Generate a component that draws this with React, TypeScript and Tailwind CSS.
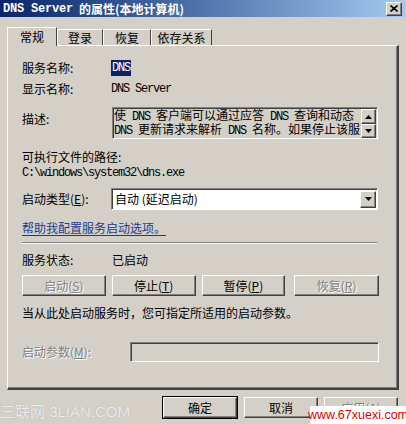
const raised =
  "border border-t-white border-l-white border-r-[#404040] border-b-[#404040] shadow-[inset_-1px_-1px_0_#808080]";
const sunken =
  "border border-t-[#808080] border-l-[#808080] border-r-white border-b-white shadow-[inset_1px_1px_0_#404040]";
const mono = "font-['Liberation_Mono',monospace] tracking-[-1.2px] whitespace-pre";
const disabled = "text-[#808080] [text-shadow:1px_1px_0_#fff]";

function Arrow({ up }: { up?: boolean }) {
  return (
    <svg width="7" height="4" viewBox="0 0 7 4" aria-hidden="true">
      {up ? <path d="M3.5 0L7 4H0Z" fill="#000" /> : <path d="M0 0H7L3.5 4Z" fill="#000" />}
    </svg>
  );
}

function Tab({ label, active, w }: { label: string; active?: boolean; w: string }) {
  return (
    <div
      className={`flex items-center justify-center border-t border-l border-r border-t-white border-l-white border-r-[#404040] ${w} ${
        active ? "h-[19px] -mb-px bg-[#D4D0C8] relative z-10" : "h-[16px]"
      }`}
    >
      <span className="text-[12px] leading-[14px]">{label}</span>
    </div>
  );
}

function Btn({ children, off, w }: { children: React.ReactNode; off?: boolean; w: string }) {
  return (
    <div className={`${raised} ${w} h-[21px] flex items-center justify-center bg-[#D4D0C8] text-[12px] ${off ? disabled : ""}`}>
      {children}
    </div>
  );
}

export default function App() {
  return (
    <div className="relative w-[406px] h-[424px] overflow-hidden bg-[#D4D0C8] text-black font-['Noto_Sans_CJK_SC',sans-serif] text-[12px] leading-[16px]">
      {/* title bar */}
      <div className="h-[17px] flex items-center justify-between pl-[3px] pr-[4px] bg-gradient-to-r from-[#0A246A] to-[#A6CAF0]">
        <div className="flex items-center text-white font-bold text-[12px] leading-[14px]">
          <span className="font-['Liberation_Mono',monospace] tracking-[-0.2px]">DNS Server</span>
          <span className="ml-[6px]">的属性(本地计算机)</span>
        </div>
        <div className={`${raised} w-[16px] h-[14px] bg-[#D4D0C8] flex items-center justify-center`}>
          <svg width="8" height="7" viewBox="0 0 8 7" aria-hidden="true">
            <path d="M0.5 0.5L7.5 6.5M7.5 0.5L0.5 6.5" stroke="#000" strokeWidth="1.6" />
          </svg>
        </div>
      </div>

      {/* tabs */}
      <div className="mt-[10px] ml-[7px] flex items-end h-[18px]">
        <Tab label="常规" active w="w-[50px]" />
        <Tab label="登录" w="w-[46px]" />
        <Tab label="恢复" w="w-[48px]" />
        <Tab label="依存关系" w="w-[61px]" />
      </div>

      {/* panel */}
      <div className="ml-[7px] w-[392px] h-[345px] border-t border-l border-t-white border-l-white border-r-2 border-b-2 border-r-[#404040] border-b-[#404040] shadow-[inset_-1px_-1px_0_#808080] pl-[14px] pr-[18px] pt-[14px]">
        <div className="flex h-[16px] items-center">
          <span className="w-[89px]">服务名称:</span>
          <span className={`${mono} bg-[#0A246A] text-white px-[1px]`}>DNS</span>
        </div>
        <div className="flex h-[16px] items-center mt-[5px]">
          <span className="w-[89px]">显示名称:</span>
          <span className={mono}>DNS Server</span>
        </div>
        <div className="flex mt-[10px]">
          <span className="w-[90px] mt-[4px]">描述:</span>
          <div className={`${sunken} w-[266px] h-[32px] bg-[#D4D0C8] flex`}>
            <div className="flex-1 overflow-hidden pl-[1px] pt-[1px] text-[12px] leading-[12px] whitespace-nowrap">
              <div>
                使<span className={mono}> DNS </span>客户端可以通过应答<span className={mono}> DNS </span>查询和动态
              </div>
              <div>
                <span className={mono}>DNS </span>更新请求来解析<span className={mono}> DNS </span>名称。如果停止该服
              </div>
            </div>
            <div className="w-[15px] flex flex-col mr-[1px] mt-[1px]">
              <div className={`${raised} h-[15px] bg-[#D4D0C8] flex items-center justify-center`}>
                <Arrow up />
              </div>
              <div className={`${raised} h-[14px] bg-[#D4D0C8] flex items-center justify-center`}>
                <Arrow />
              </div>
            </div>
          </div>
        </div>
        <div className="mt-[10px] h-[16px] flex items-center">可执行文件的路径:</div>
        <div className={`h-[16px] flex items-center ${mono}`}>C:\windows\system32\dns.exe</div>
        <div className="flex items-center mt-[7px]">
          <span className="w-[89px]">
            启动类型(<u>E</u>):
          </span>
          <div className={`${sunken} w-[267px] h-[22px] bg-white flex items-center justify-between pl-[3px] pr-[1px]`}>
            <span className="text-[12px]">自动 (延迟启动)</span>
            <div className={`${raised} w-[16px] h-[17px] bg-[#D4D0C8] flex items-center justify-center`}>
              <Arrow />
            </div>
          </div>
        </div>
        <div className="mt-[10px] h-[16px] flex items-center">
          <span className="text-[#1C3A92] underline underline-offset-2">帮助我配置服务启动选项。</span>
        </div>
        <div className="mt-[6px] w-[355px] h-[2px] border-t border-t-[#808080] border-b border-b-white" />
        <div className="flex h-[16px] items-center mt-[8px]">
          <span className="w-[90px]">服务状态:</span>
          <span>已启动</span>
        </div>
        <div className="flex mt-[7px] gap-[6px]">
          <Btn off w="w-[84px]">
            启动(<u>S</u>)
          </Btn>
          <Btn w="w-[84px]">
            停止(<u>T</u>)
          </Btn>
          <Btn w="w-[84px]">
            暂停(<u>P</u>)
          </Btn>
          <Btn off w="w-[85px] ml-[3px]">
            恢复(<u>R</u>)
          </Btn>
        </div>
        <div className="mt-[9px] h-[16px] flex items-center">当从此处启动服务时，您可指定所适用的启动参数。</div>
        <div className="flex items-center mt-[21px]">
          <span className={`w-[108px] ${disabled}`}>
            启动参数(<u>M</u>):
          </span>
          <div className={`${sunken} w-[249px] h-[20px] bg-[#D4D0C8]`} />
        </div>
      </div>

      {/* dialog buttons */}
      <div className="flex justify-end gap-[6px] pr-[8px] mt-[6px]">
        <div className="border border-black">
          <Btn w="w-[74px]">确定</Btn>
        </div>
        <Btn w="w-[74px] mt-px">取消</Btn>
        <Btn off w="w-[74px] mt-px">
          应用(<u>A</u>)
        </Btn>
      </div>

      {/* watermarks */}
      <div className="absolute left-0 top-[403px] text-[15px] leading-[17px] text-white/80 [text-shadow:0_0_1px_#999] font-['Liberation_Sans','Noto_Sans_CJK_SC',sans-serif]">
        三联网 3LIAN.COM
      </div>
      <div className="absolute left-[310px] top-[406px] w-[96px] h-[18px] bg-white flex items-center justify-center text-[12.5px] text-[#E00000] font-['Liberation_Sans',sans-serif]">
        www.67xuexi.com
      </div>
    </div>
  );
}
